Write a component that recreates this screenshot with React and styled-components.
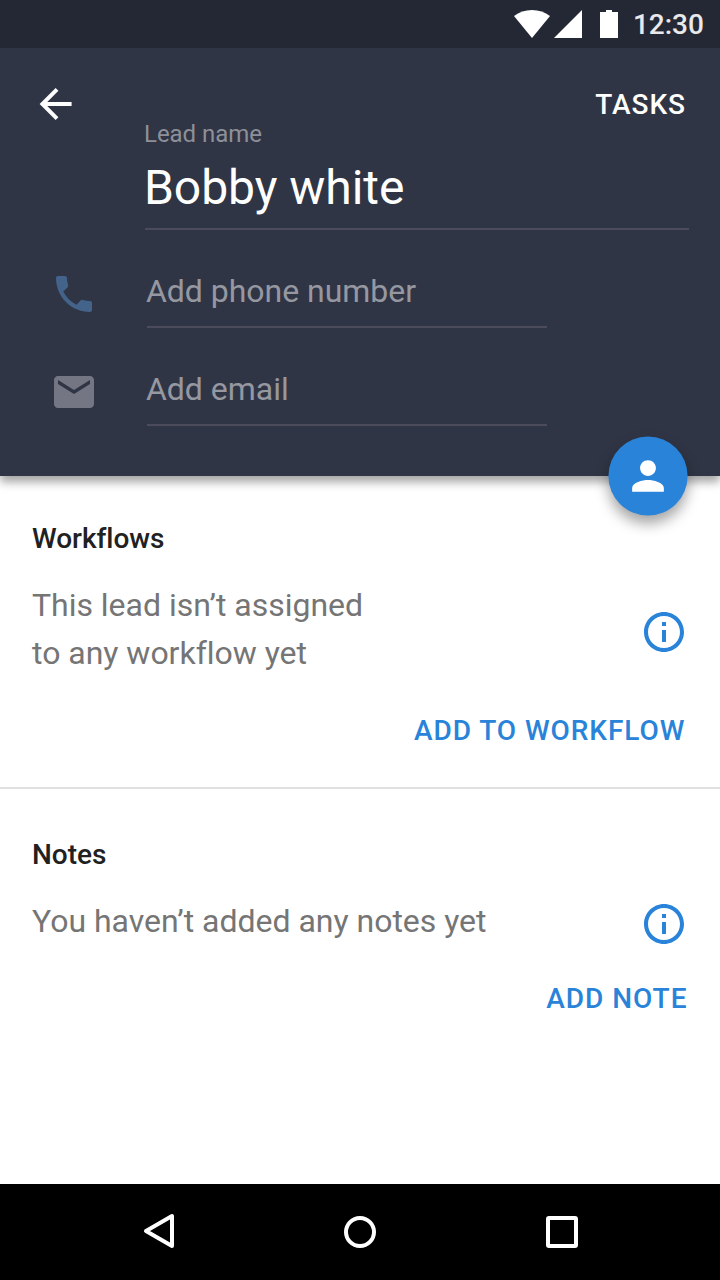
import React from 'react';
import styled, { createGlobalStyle } from 'styled-components';

const GlobalStyle = createGlobalStyle`
  * { box-sizing: border-box; }
  body {
    margin: 0;
    background: #fff;
    font-family: Roboto, 'Liberation Sans', sans-serif;
    font-variant-ligatures: none;
  }
`;

const Screen = styled.div`
  width: 720px;
  height: 1280px;
  display: flex;
  flex-direction: column;
  overflow: hidden;
  background: #fff;
`;

const StatusBar = styled.div`
  position: relative;
  z-index: 1;
  height: 48px;
  flex: none;
  display: flex;
  align-items: flex-start;
  padding: 10px 16px 0 514px;
  background: #242834;
`;

const StatusIcon = styled.svg`
  display: block;
  flex: none;
  margin-right: ${(p) => p.$gap}px;
  fill: #fff;
`;

const Clock = styled.span`
  margin-top: -2px;
  font-size: 28px;
  font-weight: 500;
  line-height: 33px;
  letter-spacing: -0.05px;
  white-space: nowrap;
  color: #e9e9eb;
`;

const Header = styled.header`
  position: relative;
  flex: none;
  height: 428px;
  background: #303545;
  box-shadow: 0 6px 9px rgba(0, 0, 0, 0.36);
`;

const Toolbar = styled.div`
  height: 72px;
  display: flex;
  justify-content: space-between;
  align-items: flex-start;
  padding: 40px 34px 0 39px;
`;

const Icon = styled.svg`
  display: block;
  flex: none;
  width: ${(p) => p.$size || 48}px;
  height: ${(p) => p.$size || 48}px;
  overflow: visible;
  fill: ${(p) => p.$color || '#fff'};
`;

const TextButton = styled.button`
  border: 0;
  padding: 0;
  background: none;
  font: 500 28px/33px Roboto, 'Liberation Sans', sans-serif;
  letter-spacing: 0.95px;
  white-space: nowrap;
  color: ${(p) => p.$color || '#2983d8'};
`;

const NameField = styled.div`
  height: 110px;
  margin: 0 31px 0 145px;
  border-bottom: 2px solid #4b4b5c;
`;

const FieldLabel = styled.div`
  margin-left: -1px;
  padding-bottom: 12px;
  font-size: 24px;
  line-height: 28px;
  letter-spacing: -0.04px;
  color: #8e9099;
`;

const FieldValue = styled.div`
  margin-left: -1px;
  font-size: 48px;
  line-height: 56px;
  letter-spacing: -0.05px;
  color: #fff;
`;

const FieldRow = styled.div`
  height: 98px;
  display: flex;
  align-items: flex-end;
  padding-left: 50px;
`;

const FieldIcon = styled.div`
  width: 97px;
  padding-bottom: 10px;
`;

const FieldInput = styled.div`
  width: 400px;
  height: 56px;
  border-bottom: 2px solid #4b4b5c;
  font-size: 32px;
  line-height: 38px;
  letter-spacing: -0.03px;
  text-indent: -1px;
  color: #9698a1;
`;

const Fab = styled.button`
  position: absolute;
  right: 32px;
  bottom: -40px;
  width: 80px;
  height: 80px;
  display: flex;
  align-items: center;
  justify-content: center;
  border: 0;
  padding: 0;
  border-radius: 50%;
  background: #2983d8;
  box-shadow: 0 8px 14px rgba(0, 0, 0, 0.36);
  transform: scale(0.99);
`;

const Section = styled.section`
  height: ${(p) => p.$height}px;
  flex: none;
  display: flex;
  flex-direction: column;
  padding: ${(p) => p.$top}px 32px 0;
  border-bottom: ${(p) => (p.$divided ? '2px solid #e0e0e0' : '0')};
`;

const Title = styled.h2`
  margin: 0;
  font-size: 28px;
  font-weight: 500;
  line-height: 33px;
  letter-spacing: -0.04px;
  color: #212121;
`;

const Message = styled.div`
  display: flex;
  justify-content: space-between;
  align-items: center;
  margin: 26px 0 0;
  padding-right: 4px;
`;

const MessageText = styled.p`
  margin: 0;
  font-size: 32px;
  line-height: 48px;
  letter-spacing: -0.02px;
  color: #757575;
`;

const InfoIcon = styled(Icon).attrs({
  $size: 40,
  $color: '#2983d8',
  viewBox: '2 2 20 20',
})`
  margin-top: 6px;
`;

const Actions = styled.div`
  display: flex;
  justify-content: flex-end;
  margin: 37px ${(p) => p.$right}px 0 0;
`;

const NavBar = styled.nav`
  height: 96px;
  flex: none;
  margin-top: auto;
  display: flex;
  align-items: center;
  justify-content: space-between;
  padding: 0 134px;
  background: #000;
`;

const NavIcon = styled.svg`
  display: block;
  width: 48px;
  height: 48px;
  fill: none;
  stroke: #fff;
  stroke-width: 4;
  stroke-linejoin: round;
`;

const Info = () => (
  <InfoIcon>
    <path d="M11 17h2v-6h-2v6zm1-15C6.48 2 2 6.48 2 12s4.48 10 10 10 10-4.48 10-10S17.52 2 12 2zm0 18c-4.41 0-8-3.59-8-8s3.59-8 8-8 8 3.59 8 8-3.59 8-8 8zM11 9h2V7h-2v2z" />
  </InfoIcon>
);

export default function App() {
  return (
    <>
      <GlobalStyle />
      <Screen>
        <StatusBar>
          <StatusIcon width="36" height="28" viewBox="0 0 36 28" $gap={4}>
            <path d="M18 28L0 6C5 2.2 11.2 0 18 0s13 2.2 18 6z" />
          </StatusIcon>
          <StatusIcon width="28" height="28" viewBox="0 0 28 28" $gap={18}>
            <path d="M0 28L28 0v28z" />
          </StatusIcon>
          <StatusIcon width="18" height="28" viewBox="0 0 18 28" $gap={15}>
            <path d="M0 2h6V0h6v2h6v26H0z" />
          </StatusIcon>
          <Clock>12:30</Clock>
        </StatusBar>

        <Header>
          <Toolbar>
            <Icon $size={32} viewBox="3.7 4 16 16">
              <path d="M20 11H7.83l5.59-5.59L12 4l-8 8 8 8 1.41-1.41L7.83 13H20v-2z" />
            </Icon>
            <TextButton $color="#fff">TASKS</TextButton>
          </Toolbar>
          <NameField>
            <FieldLabel>Lead name</FieldLabel>
            <FieldValue>Bobby white</FieldValue>
          </NameField>
          <FieldRow>
            <FieldIcon>
              <Icon viewBox="0 0 24 24" $color="#44638a">
                <path d="M6.62 10.79c1.44 2.83 3.76 5.14 6.59 6.59l2.2-2.2c.27-.27.67-.36 1.02-.24 1.12.37 2.33.57 3.57.57.55 0 1 .45 1 1V20c0 .55-.45 1-1 1-9.39 0-17-7.61-17-17 0-.55.45-1 1-1h3.5c.55 0 1 .45 1 1 0 1.25.2 2.45.57 3.57.11.35.03.74-.25 1.02l-2.2 2.2z" />
              </Icon>
            </FieldIcon>
            <FieldInput>Add phone number</FieldInput>
          </FieldRow>
          <FieldRow>
            <FieldIcon>
              <Icon viewBox="0 0 24 24" $color="#747683">
                <path d="M20 4H4c-1.1 0-1.99.9-1.99 2L2 18c0 1.1.9 2 2 2h16c1.1 0 2-.9 2-2V6c0-1.1-.9-2-2-2zm0 4l-8 5-8-5V6l8 5 8-5v2z" />
              </Icon>
            </FieldIcon>
            <FieldInput>Add email</FieldInput>
          </FieldRow>
          <Fab aria-label="Lead">
            <Icon viewBox="0 0 24 24">
              <path d="M12 12c2.21 0 4-1.79 4-4s-1.79-4-4-4-4 1.79-4 4 1.79 4 4 4zm0 2c-2.67 0-8 1.34-8 4v2h16v-2c0-2.66-5.33-4-8-4z" />
            </Icon>
          </Fab>
        </Header>

        <Section $height={313} $top={46} $divided>
          <Title>Workflows</Title>
          <Message>
            <MessageText>
              This lead isn’t assigned
              <br />
              to any workflow yet
            </MessageText>
            <Info />
          </Message>
          <Actions $right={2.6}>
            <TextButton>ADD TO WORKFLOW</TextButton>
          </Actions>
        </Section>

        <Section $height={300} $top={49}>
          <Title>Notes</Title>
          <Message>
            <MessageText>You haven’t added any notes yet</MessageText>
            <Info />
          </Message>
          <Actions $right={0.6}>
            <TextButton>ADD NOTE</TextButton>
          </Actions>
        </Section>

        <NavBar>
          <NavIcon viewBox="0 0 48 48">
            <path d="M12 23L38 8v30z" />
          </NavIcon>
          <NavIcon viewBox="0 0 48 48">
            <circle cx="24" cy="24" r="14" />
          </NavIcon>
          <NavIcon viewBox="0 0 48 48">
            <rect x="10" y="10" width="28" height="28" rx="1" />
          </NavIcon>
        </NavBar>
      </Screen>
    </>
  );
}
